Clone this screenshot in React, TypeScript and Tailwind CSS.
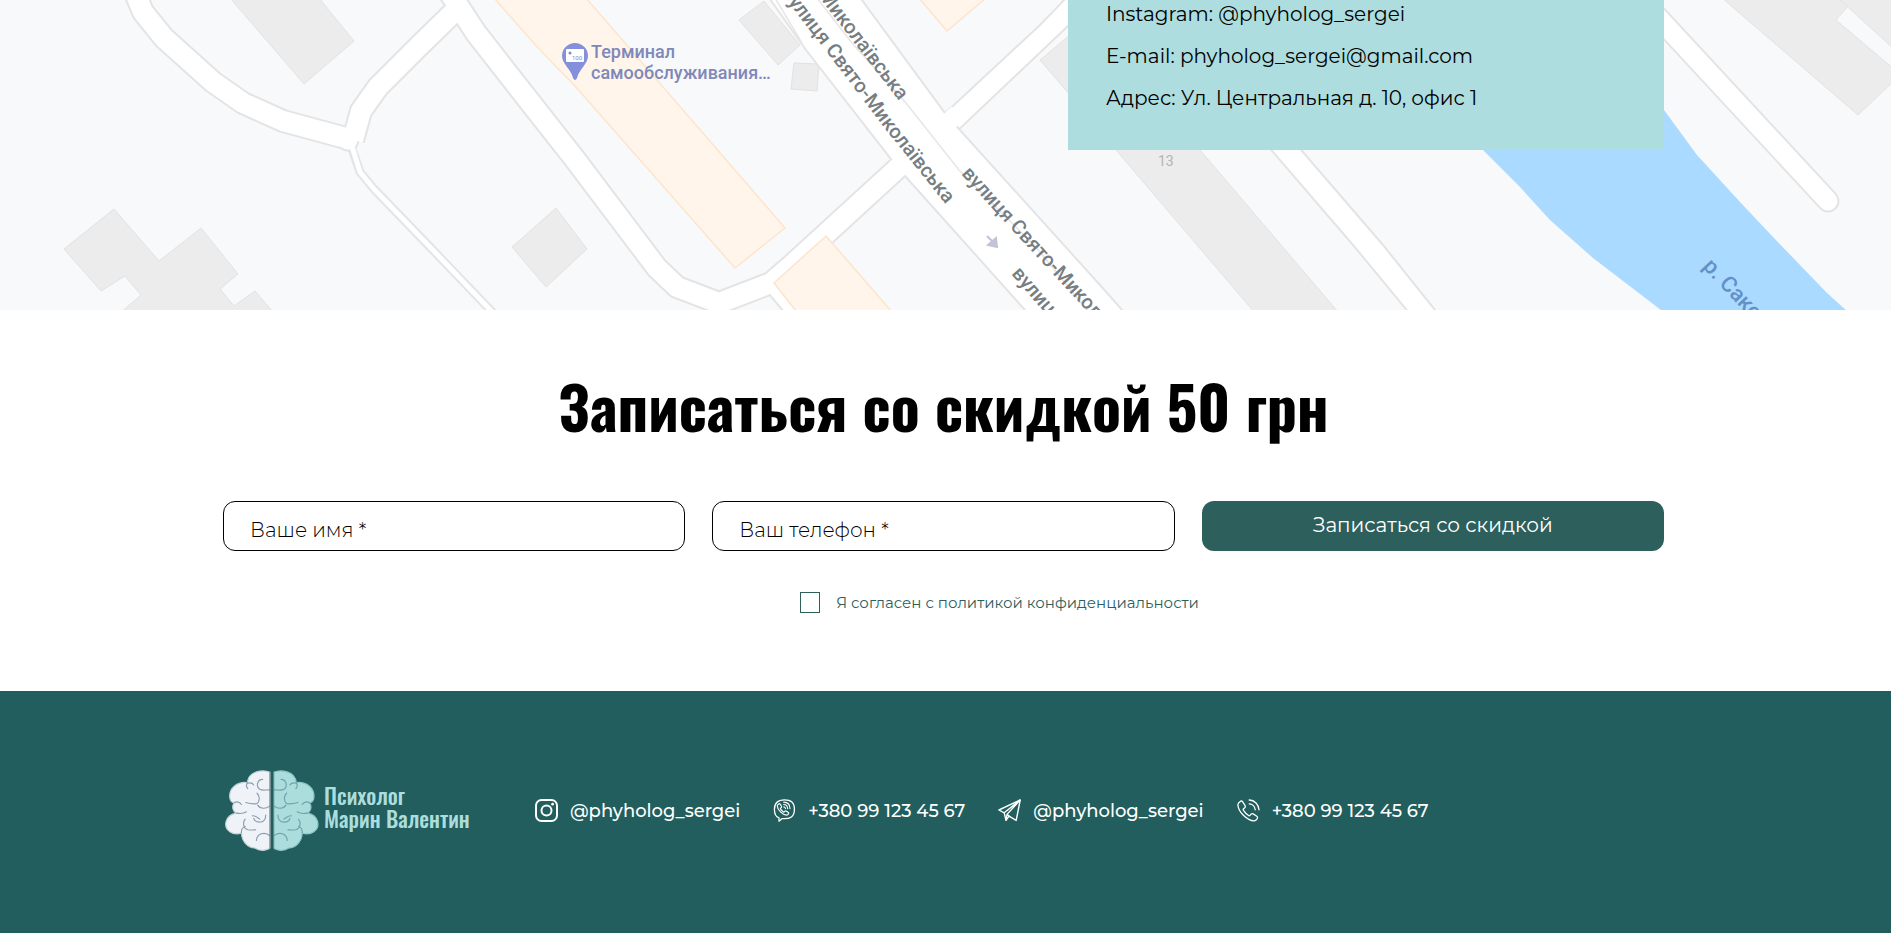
import React from "react";

const montserrat = "font-['Montserrat','Open_Sans',sans-serif]";

const roads = [
  "M133,-12 L143,12 L164,38 L213,82 L243,103 L283,121 L353,140",
  "M353,140 L361,111 L378,87 L418,47 L458,8",
  "M440,-22 L476,33 L526,97 L574,158 L657,268 L677,287 L719,303 L771,283 L793,264 L900,166",
  "M775,284 L830,350",
];

function MapBackdrop() {
  return (
    <svg
      className="absolute inset-0 h-full w-full"
      viewBox="0 0 1891 310"
      preserveAspectRatio="xMidYMid slice"
      role="img"
      aria-label="Карта"
    >
      <rect width="1891" height="310" fill="#f8f9fb" />

      <g fill="#ececec" stroke="#e2e2e3" strokeWidth="1">
        <path d="M230,-2 L304,84 L354,41 L319,-2 Z" />
        <path d="M64,249 L114,209 L159,261 L201,228 L238,274 L220,289 L234,306 L255,291 L280,320 L112,320 L141,295 L125,276 L101,291 Z" />
        <path d="M556,208 L587,249 L546,287 L512,247 Z" />
        <path d="M764,1 L739,20 L778,65 L800,45 Z" />
        <path d="M794,63 L819,64 L817,91 L791,89 Z" />
        <path d="M1040,60 L1100,10 L1100,130 Z" />
        <path d="M1099,130 L1116,150 L1261,320 L1345,320 L1200,150 L1183,130 Z" />
        <path d="M1722,-2 L1858,115 L1895,80 L1895,70 L1836,20 L1848,6 L1855,-2 Z" />
        <path d="M1838,-2 L1895,50 L1895,-2 Z" />
      </g>

      <path
        d="M1463,130 L1483,150 L1520,187 L1550,220 L1593,258 L1674,320 L1857,320 L1827,293 L1773,237 L1740,202 L1697,155 L1664,110 L1640,75 Z"
        fill="#aadaff"
      />

      <g fill="none" strokeLinejoin="round">
        <path d="M351,146 L360,172 L374,189 L430,247 L497,317" stroke="#e5e5e6" strokeWidth="9" />
        {roads.map((d) => (
          <path key={d} d={d} stroke="#e4e4e5" strokeWidth="24" />
        ))}
        <circle cx="348" cy="140" r="11.5" fill="#e4e4e5" />
        <path d="M1640,-2 L1828,201" stroke="#e4e4e5" strokeWidth="23" strokeLinecap="round" />
      </g>

      <g fill="#ffffff" stroke="#e4e4e5" strokeWidth="2">
        <path d="M1254,130 L1353,245 L1415,320 L1443,320 L1383,245 L1284,130 Z" />
        <path d="M940,118 L1040,25 L1070,-6 L1100,0 L1068,26 L952,136 Z" />
        <path d="M765,-8 L806,50 L891,159 L905,176 L1034,320 L1131,320 L1100,285 L959,129 L945,113 L856,-8 Z" />
      </g>

      <g fill="none" stroke="#ffffff" strokeLinejoin="round">
        <path d="M350,140 L360,172 L374,189 L430,247 L497,317" strokeWidth="5" />
        {roads.map((d) => (
          <path key={d} d={d} strokeWidth="20" />
        ))}
        <circle cx="348" cy="140" r="9.5" fill="#ffffff" stroke="none" />
        <path d="M1640,-2 L1828,201" strokeWidth="19" strokeLinecap="round" />
        <path d="M890,175 L905,161" strokeWidth="19" />
        <path d="M940,130 L958,113" strokeWidth="18" />
      </g>

      <g fill="none" stroke="#e6e6e7" strokeWidth="1.5">
        <path d="M775,-2 L802,43" />
        <path d="M817,-2 L852,43 L906,103 L959,170 L1036,247 L1095,320" />
      </g>

      <g fill="#fff5eb" stroke="#fde5cd" strokeWidth="1.5">
        <path d="M494,-2 L540,50 L575,86 L735,268 L785,228 L586,-2 Z" />
        <path d="M826,236 L774,283 L803,320 L899,320 Z" />
        <path d="M919,-2 L947,31 L986,-2 Z" />
      </g>

      <path
        d="M575,43 a13,13 0 0 1 13,13 c0,8 -9,13 -11,22 q-2,4 -4,0 c-2,-9 -11,-14 -11,-22 a13,13 0 0 1 13,-13 Z"
        fill="#8490db"
      />
      <rect x="566" y="49" width="18" height="13" rx="1" fill="#ffffff" />
      <circle cx="570" cy="53" r="1.5" fill="#7d8ad8" />
      <text x="572" y="60" fontFamily="Roboto, sans-serif" fontSize="6" fill="#7d8ad8">
        100
      </text>

      <g fontFamily="Roboto, sans-serif" fontSize="18" fontWeight="500" fill="#7f88b8">
        <text x="591" y="58">Терминал</text>
        <text x="591" y="79">самообслуживания…</text>
      </g>

      <defs>
        <path id="street-a" d="M781,-7 L825,50 L886,130 L980,247" />
        <path id="street-b" d="M700,-158 L825,5 L899,101" />
        <path id="street-c" d="M961,174 L1001,218 L1180,412" />
        <path id="street-d" d="M1011,274 L1170,456" />
        <path id="river" d="M1702,267 L1800,370" />
      </defs>
      <g fontFamily="Roboto, sans-serif" fontSize="20" fontWeight="500" fill="#777d80">
        <text>
          <textPath href="#street-a">вулиця Свято-Миколаївська</textPath>
        </text>
        <text textAnchor="end">
          <textPath href="#street-b" startOffset="100%">
            Миколаївська
          </textPath>
        </text>
        <text>
          <textPath href="#street-c">вулиця Свято-Микол</textPath>
        </text>
        <text>
          <textPath href="#street-d">вулиця</textPath>
        </text>
      </g>
      <text fontFamily="Roboto, sans-serif" fontSize="22" fontWeight="500" fill="#6490c8">
        <textPath href="#river">р. Сако</textPath>
      </text>
      <text x="1158" y="166" fontFamily="Roboto, sans-serif" fontSize="14" fill="#b4b4b4">
        13
      </text>
      <path d="M987,236 L993,242 M997,247 L988,245 L996,238 Z" fill="#c3c3d6" stroke="#c3c3d6" strokeWidth="2" />
    </svg>
  );
}

const halfOutline =
  "M165,49 C145,40 100,44 97,80 C68,76 40,96 44,126 C45,134 51,140 57,141 C49,152 53,168 64,172 C30,178 22,212 44,228 C54,235 66,236 79,232 C80,256 96,276 119,277 C134,287 156,286 165,276 Z";
const halfFolds =
  "M97,80 C92,88 94,94 98,98 M97,82 C106,79 113,82 116,87 M143,70 C126,70 122,92 134,100 C144,106 156,100 165,102 M126,112 C138,124 132,146 118,144 C106,144 98,142 92,140 M57,141 C64,136 74,138 79,146 M128,148 C136,160 152,160 165,150 M64,172 C74,174 84,174 94,168 M152,178 C152,204 122,204 116,188 M134,190 C124,182 120,178 112,180 M90,190 C82,200 84,218 98,222 C108,224 118,222 122,222 M79,232 C78,220 84,214 90,212 M124,254 C126,234 148,226 165,240";

function BrainLogo() {
  return (
    <svg className="h-[81px] w-[94px] shrink-0" viewBox="30 42 282 244" aria-hidden="true">
      <g fill="none" strokeWidth="3.5" strokeLinecap="round">
        <path d={halfOutline} fill="#eff3f8" stroke="#c3d3da" />
        <path d={halfFolds} stroke="#8b9fae" />
        <g transform="translate(341 0) scale(-1 1)">
          <path d={halfOutline} fill="#abdddd" stroke="#8fc7c9" />
          <path d={halfFolds} stroke="#6fa3ac" />
        </g>
        <path d="M165,50 V276 M176,50 V276" stroke="#5d7b80" strokeWidth="3" />
      </g>
    </svg>
  );
}

function InstagramIcon() {
  return (
    <svg className="size-[23px] shrink-0" viewBox="0 0 23 23" fill="none" stroke="#fff" strokeWidth="2" aria-hidden="true">
      <rect x="1" y="1" width="21" height="21" rx="5.5" />
      <circle cx="11.5" cy="11.5" r="5" />
      <circle cx="17.6" cy="5.2" r="1.4" fill="#fff" stroke="none" />
    </svg>
  );
}

const handset =
  "M4.6,2.2 C3.6,2.8 2,4 1.9,5.6 C1.9,9.2 4.4,13.4 7.4,16.3 C10.4,19.3 14.6,21.9 18,21.9 C19.6,21.8 20.8,20.3 21.4,19.3 C21.8,18.5 21.5,17.8 20.8,17.3 L17.2,14.9 C16.5,14.4 15.7,14.5 15.1,15.1 L14,16.4 C13.6,16.8 13.1,16.9 12.6,16.5 C10.5,15.2 8.6,13.3 7.3,11.2 C7,10.7 7.1,10.2 7.5,9.8 L8.8,8.7 C9.4,8.2 9.5,7.4 9.1,6.7 L6.7,2.9 C6.2,2.2 5.4,1.8 4.6,2.2 Z";

function PhoneIcon() {
  return (
    <svg className="size-[23px] shrink-0" viewBox="1 0 23 23" fill="none" stroke="#fff" strokeWidth="1.3" strokeLinecap="round" strokeLinejoin="round" aria-hidden="true">
      <path d={handset} />
      <path d="M13.2,1 C18.6,1.2 22.8,5.4 23,10.8 M13.2,4.8 C16.5,5 19,7.5 19.2,10.8" />
    </svg>
  );
}

function ViberIcon() {
  return (
    <svg className="size-[23px] shrink-0" viewBox="0 0 23 23" fill="none" stroke="#fff" strokeWidth="1.3" strokeLinecap="round" strokeLinejoin="round" aria-hidden="true">
      <path d="M11.5,0.8 C5,0.8 1.4,3.4 1.4,10.2 C1.4,15 3,17.8 6,18.9 V22.2 L9.2,19.6 C17.6,20.2 21.4,17.6 21.4,10.2 C21.4,3.4 18,0.8 11.5,0.8 Z" />
      <g transform="translate(3.2 3.4) scale(0.58)" strokeWidth="2">
        <path d={handset} />
        <path d="M13,-0.4 C19.4,-0.2 23.6,4.2 23.8,10.6 M13,3.6 C17,3.8 19.6,6.6 19.8,10.6 M13.2,7.6 C14.9,7.8 15.8,8.8 16,10.6" />
      </g>
    </svg>
  );
}

function TelegramIcon() {
  return (
    <svg className="size-[23px] shrink-0" viewBox="0 0 23 23" fill="none" stroke="#fff" strokeWidth="1.4" strokeLinejoin="round" aria-hidden="true">
      <path d="M22.2,1 L0.9,11 L6.2,13.8 L8,21.4 L11,17.2 L18.2,21.4 Z" />
      <path d="M22.2,1 L6.2,13.8 M22.2,1 L9,15.4 L8,21.4 M9,15.4 L11.4,17.2" />
    </svg>
  );
}

const contacts = [
  { icon: <InstagramIcon />, label: "@phyholog_sergei", href: "#instagram" },
  { icon: <ViberIcon />, label: "+380 99 123 45 67", href: "#viber" },
  { icon: <TelegramIcon />, label: "@phyholog_sergei", href: "#telegram" },
  { icon: <PhoneIcon />, label: "+380 99 123 45 67", href: "tel:+380991234567" },
];

const fields = [
  { id: "name", type: "text", placeholder: "Ваше имя *" },
  { id: "phone", type: "tel", placeholder: "Ваш телефон *" },
];

export default function App() {
  return (
    <div className={`flex min-h-screen flex-col bg-white text-black ${montserrat}`}>
      <section className="relative h-[310px] overflow-hidden pr-1">
        <MapBackdrop />
        <div className="relative mx-auto flex w-full max-w-[1441px] justify-end">
          <address className="flex w-full max-w-[596px] flex-col gap-[18px] bg-[#addddf] pt-0.5 pb-10 pl-[38px] text-xl leading-6 not-italic">
            <p>Instagram: @phyholog_sergei</p>
            <p>E-mail: phyholog_sergei@gmail.com</p>
            <p>Адрес: Ул. Центральная д. 10, офис 1</p>
          </address>
        </div>
      </section>

      <section className="pt-[65px] pr-1 pb-[78px]">
        <div className="mx-auto w-full max-w-[1441px]">
          <h2 className="text-center font-['Oswald','Roboto_Condensed',sans-serif] text-[60px] leading-[60px] font-bold">
            Записаться со скидкой 50 грн
          </h2>
          <form className="mt-[66px]" onSubmit={(e) => e.preventDefault()}>
            <div className="grid grid-cols-3 gap-[27px]">
              {fields.map((f) => (
                <input
                  key={f.id}
                  id={f.id}
                  type={f.type}
                  aria-label={f.placeholder}
                  placeholder={f.placeholder}
                  className="h-[50px] w-full rounded-xl border border-black pt-2 pl-[26px] text-xl leading-6 font-light placeholder:text-black"
                />
              ))}
              <button type="submit" className="h-[50px] rounded-xl bg-[#2d5f5d] pb-0.5 text-xl leading-6 text-white">
                Записаться со скидкой
              </button>
            </div>
            <div className="mt-[41px] flex items-center justify-center gap-4 pl-[112px]">
              <input
                id="agree"
                type="checkbox"
                className="h-[21px] w-5 appearance-none border border-[#2d5f5d] checked:bg-[#2d5f5d]"
              />
              <label htmlFor="agree" className="text-[15px] leading-5 text-[#2d5f5d]">
                Я согласен с политикой конфиденциальности
              </label>
            </div>
          </form>
        </div>
      </section>

      <footer className="flex-1 bg-[#215e5d] pt-[79px] pr-1 pb-[79px]">
        <div className="mx-auto flex w-full max-w-[1441px] items-center">
          <a href="#top" className="flex w-[312px] items-center gap-[5px] pl-0.5">
            <BrainLogo />
            <span className="pb-2 font-['Oswald','Roboto_Condensed',sans-serif] text-[22px] leading-[23px] font-medium text-[#abdddd]">
              Психолог
              <br />
              Марин Валентин
            </span>
          </a>
          <ul className="flex items-center gap-[33px]">
            {contacts.map((c) => (
              <li key={c.href}>
                <a href={c.href} className="flex items-center gap-3 text-lg leading-6 font-medium whitespace-nowrap text-white">
                  {c.icon}
                  {c.label}
                </a>
              </li>
            ))}
          </ul>
        </div>
      </footer>
    </div>
  );
}
